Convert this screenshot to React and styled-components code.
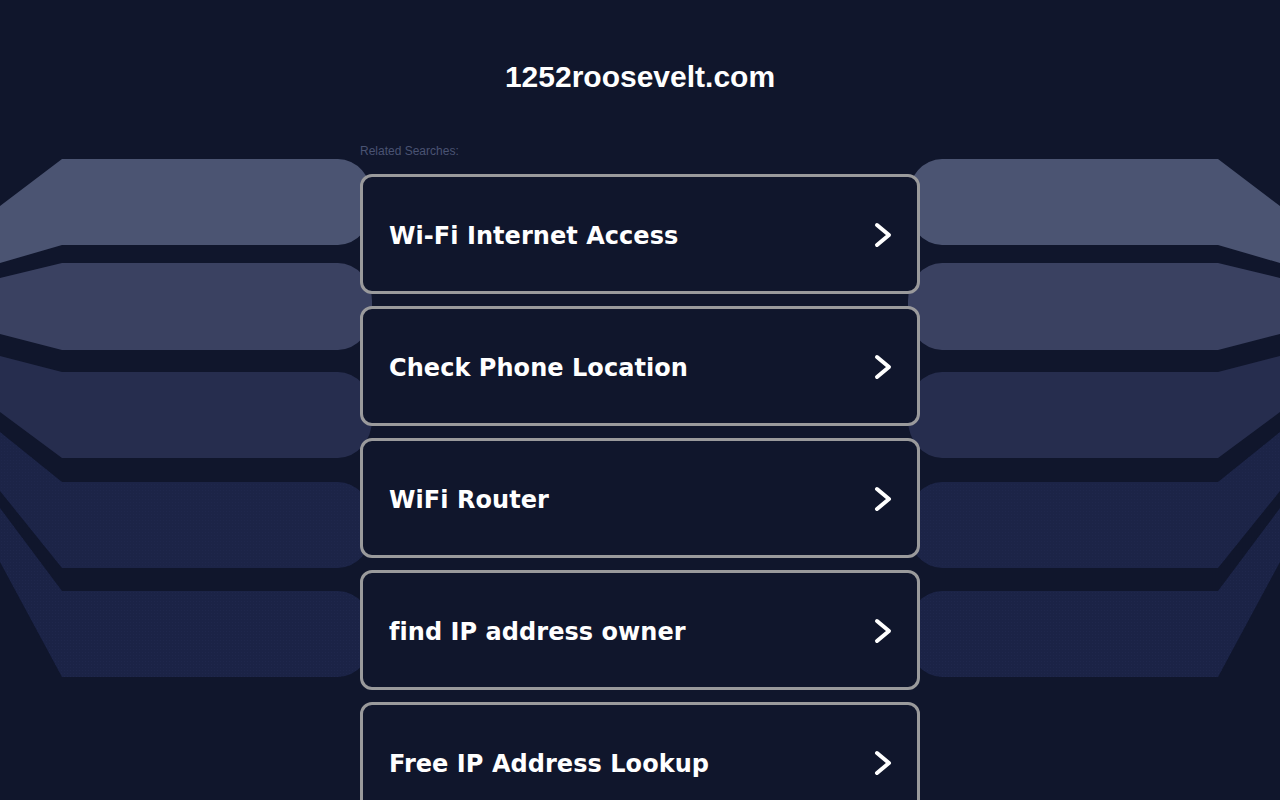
import React from "react";
import styled, { createGlobalStyle } from "styled-components";

const Global = createGlobalStyle`
  html, body { margin: 0; padding: 0; background: #10162c; }
  body { font-family: "Liberation Sans", Arial, sans-serif; }
`;

const Page = styled.div`
  position: relative;
  min-height: 100vh;
  overflow: hidden;
  background: #10162c;
`;

const Decor = styled.svg`
  position: absolute;
  left: 0;
  top: 0;
  width: 1280px;
  height: 800px;
  z-index: 0;
`;

const Content = styled.main`
  position: relative;
  z-index: 1;
  width: 560px;
  margin: 0 auto;
  padding-top: 59px;
  display: flex;
  flex-direction: column;
`;

const Title = styled.h1`
  margin: 0;
  font-family: "Liberation Sans", Arial, sans-serif;
  font-weight: 700;
  font-size: 30px;
  line-height: 36px;
  color: #ffffff;
  text-align: center;
`;

const Label = styled.div`
  margin-top: 49px;
  font-family: "Liberation Sans", Arial, sans-serif;
  font-size: 12px;
  line-height: 14px;
  color: #4a5373;
`;

const List = styled.div`
  margin-top: 16px;
  display: flex;
  flex-direction: column;
  gap: 12px;
`;

const Card = styled.a`
  box-sizing: border-box;
  height: 120px;
  border: 3px solid #9a9a9c;
  border-radius: 12px;
  background: #10162c;
  padding: 2px 26px 0;
  display: flex;
  align-items: center;
  justify-content: space-between;
  text-decoration: none;
  cursor: pointer;
`;

const CardText = styled.span`
  font-family: "DejaVu Sans", Verdana, sans-serif;
  font-weight: 700;
  font-size: 24px;
  line-height: 28px;
  padding-top: 2px;
  color: #ffffff;
  letter-spacing: 0.05px;
`;

const Chevron = () => (
  <svg width="18" height="26" viewBox="0 0 18 26" style={{ marginRight: "-1px" }}>
    <polyline
      points="3,3 15,13 3,23"
      fill="none"
      stroke="#ffffff"
      strokeWidth="4"
      strokeLinecap="round"
      strokeLinejoin="round"
    />
  </svg>
);

const bands = [
  { T: 159, B: 245, Lt: 206, Lb: 263, fill: "#4b5472" },
  { T: 263, B: 350, Lt: 278, Lb: 334, fill: "#3a4161" },
  { T: 372, B: 458, Lt: 356, Lb: 412, fill: "#262d4e" },
  { T: 482, B: 568, Lt: 432, Lb: 491, fill: "#1c2447", dots: true },
  { T: 591, B: 677, Lt: 508, Lb: 562, fill: "#1b2346", dots: true },
];

const bandPath = ({ T, B, Lt, Lb }) => {
  const R = 372;
  const rx = 34;
  const ry = 38;
  return `M0,${Lt} L62,${T} H${R - rx} A${rx} ${ry} 0 0 1 ${R},${T + ry} V${B - ry} A${rx} ${ry} 0 0 1 ${R - rx},${B} H62 L0,${Lb} Z`;
};

const Bands = () => (
  <g>
    {bands.map((b, i) => (
      <g key={i}>
        <path d={bandPath(b)} fill={b.fill} />
        {b.dots && <path d={bandPath(b)} fill="url(#dots)" />}
      </g>
    ))}
  </g>
);

const items = [
  "Wi-Fi Internet Access",
  "Check Phone Location",
  "WiFi Router",
  "find IP address owner",
  "Free IP Address Lookup",
];

export default function App() {
  return (
    <Page>
      <Global />
      <Decor viewBox="0 0 1280 800" aria-hidden="true">
        <defs>
          <pattern id="dots" width="3" height="3" patternUnits="userSpaceOnUse">
            <rect x="1" y="1" width="1" height="1" fill="#252d55" opacity="0.35" />
          </pattern>
        </defs>
        <Bands />
        <g transform="translate(1280,0) scale(-1,1)">
          <Bands />
        </g>
      </Decor>
      <Content>
        <Title>1252roosevelt.com</Title>
        <Label>Related Searches:</Label>
        <List>
          {items.map((t) => (
            <Card key={t}>
              <CardText>{t}</CardText>
              <Chevron />
            </Card>
          ))}
        </List>
      </Content>
    </Page>
  );
}
